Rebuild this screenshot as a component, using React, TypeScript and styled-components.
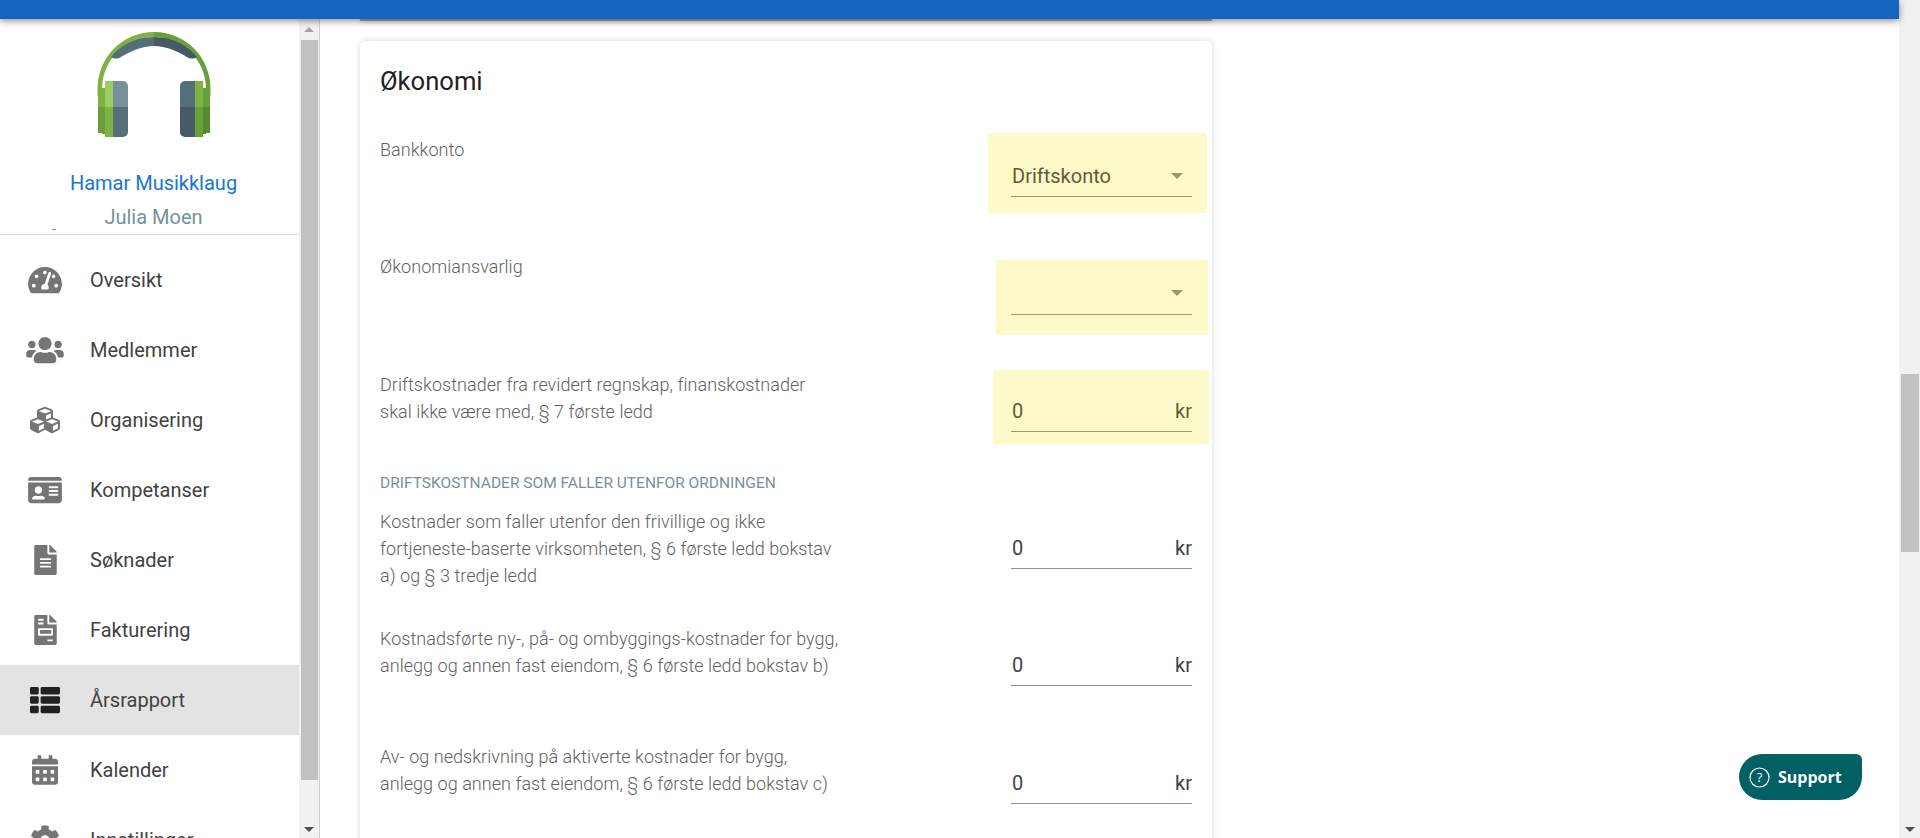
import React from "react";
import styled, { createGlobalStyle } from "styled-components";
import {
  FaTachometerAlt,
  FaUsers,
  FaCubes,
  FaIdCard,
  FaFileAlt,
  FaFileInvoice,
  FaThList,
  FaCalendarAlt,
  FaCog,
} from "react-icons/fa";

const Global = createGlobalStyle`
  html, body { margin: 0; padding: 0; height: 100%; overflow: hidden; background: #fff; }
  body { font-family: Roboto, "Liberation Sans", sans-serif; }
  * { box-sizing: border-box; }
`;

const Screen = styled.div`
  display: flex;
  height: 838px;
  overflow: hidden;
  background: #fff;
`;
const Shell = styled.div`
  flex: 1;
  min-width: 0;
  display: flex;
  flex-direction: column;
`;
const Header = styled.header`
  flex: none;
  height: 19px;
  background: #1565c0;
  box-shadow: 0 2px 7px rgba(0, 0, 0, 0.45);
  position: relative;
  z-index: 2;
`;
const Body = styled.div`
  flex: 1;
  min-height: 0;
  display: flex;
`;
const Sidebar = styled.aside`
  flex: none;
  width: 320px;
  display: flex;
  border-right: 1px solid #d0d0d0;
  overflow: hidden;
`;
const SideContent = styled.div`
  flex: none;
  width: 299px;
  display: flex;
  flex-direction: column;
  overflow: hidden;
  background: #fff;
`;
const Profile = styled.div`
  flex: none;
  height: 216px;
  padding: 13px 0 0 8px;
  display: flex;
  flex-direction: column;
  align-items: center;
  border-bottom: 1px solid #e0e0e0;
  position: relative;
`;
const Logo = styled.svg`
  display: block;
  flex: none;
  width: 114px;
  height: 106px;
`;
const OrgName = styled.div`
  margin-top: 31px;
  font-size: 20px;
  line-height: 28px;
  color: #1976d2;
`;
const UserName = styled.div`
  margin-top: 6px;
  font-size: 20px;
  line-height: 28px;
  color: #78909c;
`;
const ClippedTick = styled.span`
  position: absolute;
  left: 52px;
  bottom: 4px;
  width: 4px;
  height: 1px;
  background: #888;
`;
const Nav = styled.nav`
  flex: none;
  padding-top: 10px;
`;
const NavItem = styled.div<{ $active?: boolean }>`
  height: 70px;
  display: flex;
  align-items: center;
  background: ${(p) => (p.$active ? "#e3e3e3" : "transparent")};
  color: ${(p) => (p.$active ? "#212121" : "#757575")};
`;
const NavIcon = styled.span<{ $w: number }>`
  flex: none;
  width: 90px;
  display: flex;
  justify-content: center;
  line-height: 0;

  & > svg {
    flex: none;
    width: ${(p) => p.$w}px;
    height: 30px;
  }
`;
const NavLabel = styled.span`
  font-size: 20px;
  line-height: 28px;
  margin-top: -1px;
  color: #424242;
`;
const Track = styled.div<{ $width: number }>`
  flex: none;
  width: ${(p) => p.$width}px;
  display: flex;
  flex-direction: column;
  background: #f1f1f1;
`;
const ScrollButton = styled.div<{ $height: number }>`
  flex: none;
  height: ${(p) => p.$height}px;
  display: flex;
  align-items: center;
  justify-content: center;
`;
const ArrowUp = styled.span`
  width: 0;
  height: 0;
  border-left: 5px solid transparent;
  border-right: 5px solid transparent;
  border-bottom: 5px solid #a3a3a3;
`;
const ArrowDown = styled.span`
  width: 0;
  height: 0;
  border-left: 5px solid transparent;
  border-right: 5px solid transparent;
  border-top: 5px solid #505050;
`;
const Thumb = styled.div<{ $height: number }>`
  flex: none;
  height: ${(p) => p.$height}px;
  margin: 0 1px 0 2px;
  background: #c1c1c1;
`;
const Spacer = styled.div<{ $height?: number }>`
  flex: ${(p) => (p.$height ? "none" : 1)};
  height: ${(p) => (p.$height ? `${p.$height}px` : "auto")};
`;
const Main = styled.main`
  flex: 1;
  min-width: 0;
  padding-left: 40px;
  overflow: hidden;
  display: flex;
  flex-direction: column;
  align-items: flex-start;
`;
const PrevCardEdge = styled.div`
  flex: none;
  width: 852px;
  height: 2px;
  margin-bottom: 20px;
  background: #a8a8a8;
  box-shadow: 0 1px 4px rgba(0, 0, 0, 0.2);
`;
const Card = styled.section`
  flex: none;
  width: 852px;
  padding: 24px 20px 40px;
  background: #fff;
  border-radius: 5px;
  box-shadow: 0 0 6px rgba(0, 0, 0, 0.16);
`;
const CardTitle = styled.h2`
  margin: 0 0 38.5px;
  font-size: 25.6px;
  line-height: 32px;
  font-weight: 400;
  color: #212121;
`;
const Row = styled.div<{ $height: number }>`
  height: ${(p) => p.$height}px;
  display: flex;
  justify-content: space-between;
  align-items: flex-start;
`;
const Label = styled.div`
  font-size: 18px;
  line-height: 27px;
  font-weight: 300;
  color: #616161;
  letter-spacing: 0.04px;
`;
const SectionHeading = styled.div`
  height: 39.5px;
  padding-top: 1px;
  font-size: 15.5px;
  line-height: 28px;
  color: #78909c;
  text-transform: uppercase;
`;
const FieldSlot = styled.div`
  flex: none;
  width: 181px;
  margin-top: 22.5px;
`;
const Highlight = styled.div<{ $t: number; $r: number; $b: number; $l: number }>`
  background: #fdfaca;
  padding: ${(p) => `${p.$t}px ${p.$r}px ${p.$b}px ${p.$l}px`};
  margin: ${(p) => `-${p.$t}px -${p.$r}px -${p.$b}px -${p.$l}px`};
`;
const FieldBox = styled.div<{ $tint?: boolean }>`
  height: 39px;
  padding: 0 0 3px 1px;
  display: flex;
  align-items: center;
  justify-content: space-between;
  font-size: 20px;
  color: ${(p) => (p.$tint ? "#5f5d37" : "#424242")};
  border-bottom: 1px solid ${(p) => (p.$tint ? "#9e9c6e" : "#949494")};
`;
const Caret = styled.span`
  width: 0;
  height: 0;
  margin-right: 9px;
  border-left: 6px solid transparent;
  border-right: 6px solid transparent;
  border-top: 6px solid #9a9868;
`;
const Support = styled.button`
  position: fixed;
  left: 1739px;
  top: 754px;
  width: 123px;
  height: 46px;
  padding: 0 0 0 10px;
  display: flex;
  align-items: center;
  gap: 8px;
  border: 0;
  border-radius: 24px 6px 24px 24px;
  background: #006064;
  color: #fff;
  font-family: "Open Sans", sans-serif;
  font-size: 16px;
  font-weight: 700;
`;
const HelpIcon = styled.svg`
  display: block;
  flex: none;
  width: 21px;
  height: 21px;
`;
const HelpMark = styled.text`
  font-family: "Open Sans", sans-serif;
  font-size: 13px;
  font-weight: 400;
  fill: #fff;
  text-anchor: middle;
`;

const navItems = [
  { label: "Oversikt", Icon: FaTachometerAlt, w: 34 },
  { label: "Medlemmer", Icon: FaUsers, w: 38 },
  { label: "Organisering", Icon: FaCubes, w: 30 },
  { label: "Kompetanser", Icon: FaIdCard, w: 34 },
  { label: "Søknader", Icon: FaFileAlt, w: 23 },
  { label: "Fakturering", Icon: FaFileInvoice, w: 23 },
  { label: "Årsrapport", Icon: FaThList, w: 30, active: true },
  { label: "Kalender", Icon: FaCalendarAlt, w: 26 },
  { label: "Innstillinger", Icon: FaCog, w: 30 },
];

function Headphones() {
  return (
    <Logo viewBox="97 32 114 106" aria-hidden="true">
      <path d="M154 32 A56.5 56.5 0 0 0 97.5 88.5 L97.5 96 L102 96 L102 88.5 A52 52 0 0 1 154 37Z" fill="#7cb342" />
      <path d="M154 32 A56.5 56.5 0 0 1 210.5 88.5 L210.5 96 L206 96 L206 88.5 A52 52 0 0 0 154 37Z" fill="#689f38" />
      <path d="M154 37 C134 37 120 46 111 57 C114 59 118 59 121 57 C131 51 142 46 154 46Z" fill="#546e7a" />
      <path d="M154 37 C174 37 188 46 197 57 C194 59 190 59 187 57 C177 51 166 46 154 46Z" fill="#455a64" />
      <path d="M98 88h7v19h-7z" fill="#7cb342" />
      <path d="M98 107h7v27h-3v-1h-4z" fill="#689f38" />
      <path d="M105 81h8v26h-8z" fill="#9ccc65" />
      <path d="M105 107h8v30h-8z" fill="#7cb342" />
      <path d="M113 81h10a5 5 0 0 1 5 5v21h-15z" fill="#78909c" />
      <path d="M113 107h15v25a5 5 0 0 1 -5 5h-10z" fill="#546e7a" />
      <path d="M195 81h-10a5 5 0 0 0 -5 5v21h15z" fill="#546e7a" />
      <path d="M195 107h-15v25a5 5 0 0 0 5 5h10z" fill="#455a64" />
      <path d="M195 81h8v26h-8z" fill="#7cb342" />
      <path d="M195 107h8v30h-8z" fill="#689f38" />
      <path d="M203 88h7v19h-7z" fill="#689f38" />
      <path d="M203 107h7v26h-4v1h-3z" fill="#558b2f" />
    </Logo>
  );
}

function Amount({ tint }: { tint?: boolean }) {
  return (
    <FieldBox $tint={tint}>
      <span>0</span>
      <span>kr</span>
    </FieldBox>
  );
}

export default function App() {
  return (
    <Screen>
      <Global />
      <Shell>
        <Header />
        <Body>
          <Sidebar>
            <SideContent>
              <Profile>
                <Headphones />
                <OrgName>Hamar Musikklaug</OrgName>
                <UserName>Julia Moen</UserName>
                <ClippedTick />
              </Profile>
              <Nav>
                {navItems.map(({ label, Icon, w, active }) => (
                  <NavItem key={label} $active={active}>
                    <NavIcon $w={w}>
                      <Icon />
                    </NavIcon>
                    <NavLabel>{label}</NavLabel>
                  </NavItem>
                ))}
              </Nav>
            </SideContent>
            <Track $width={20}>
              <ScrollButton $height={21}>
                <ArrowUp />
              </ScrollButton>
              <Thumb $height={740} />
              <Spacer />
              <ScrollButton $height={17}>
                <ArrowDown />
              </ScrollButton>
            </Track>
          </Sidebar>
          <Main>
            <PrevCardEdge />
            <Card>
              <CardTitle>Økonomi</CardTitle>
              <Row $height={117.5}>
                <Label>Bankkonto</Label>
                <FieldSlot>
                  <Highlight $t={25} $r={15} $b={16} $l={23}>
                    <FieldBox $tint>
                      <span>Driftskonto</span>
                      <Caret />
                    </FieldBox>
                  </Highlight>
                </FieldSlot>
              </Row>
              <Row $height={117.5}>
                <Label>Økonomiansvarlig</Label>
                <FieldSlot>
                  <Highlight $t={16} $r={16} $b={20} $l={15}>
                    <FieldBox $tint>
                      <span />
                      <Caret />
                    </FieldBox>
                  </Highlight>
                </FieldSlot>
              </Row>
              <Row $height={97.5}>
                <Label>
                  Driftskostnader fra revidert regnskap, finanskostnader
                  <br />
                  skal ikke være med, § 7 første ledd
                </Label>
                <FieldSlot>
                  <Highlight $t={23} $r={17} $b={12} $l={18}>
                    <Amount tint />
                  </Highlight>
                </FieldSlot>
              </Row>
              <SectionHeading>Driftskostnader som faller utenfor ordningen</SectionHeading>
              <Row $height={117}>
                <Label>
                  Kostnader som faller utenfor den frivillige og ikke
                  <br />
                  fortjeneste-baserte virksomheten, § 6 første ledd bokstav
                  <br />
                  a) og § 3 tredje ledd
                </Label>
                <FieldSlot>
                  <Amount />
                </FieldSlot>
              </Row>
              <Row $height={118}>
                <Label>
                  Kostnadsførte ny-, på- og ombyggings-kostnader for bygg,
                  <br />
                  anlegg og annen fast eiendom, § 6 første ledd bokstav b)
                </Label>
                <FieldSlot>
                  <Amount />
                </FieldSlot>
              </Row>
              <Row $height={117.5}>
                <Label>
                  Av- og nedskrivning på aktiverte kostnader for bygg,
                  <br />
                  anlegg og annen fast eiendom, § 6 første ledd bokstav c)
                </Label>
                <FieldSlot>
                  <Amount />
                </FieldSlot>
              </Row>
            </Card>
          </Main>
        </Body>
      </Shell>
      <Track $width={21}>
        <Spacer $height={374} />
        <Thumb $height={178} />
        <Spacer />
        <ScrollButton $height={17}>
          <ArrowDown />
        </ScrollButton>
      </Track>
      <Support type="button">
        <HelpIcon viewBox="0 0 21 21" aria-hidden="true">
          <circle cx="10.5" cy="10.5" r="9.5" fill="none" stroke="#fff" strokeWidth="1.2" />
          <HelpMark x="10.5" y="15">?</HelpMark>
        </HelpIcon>
        Support
      </Support>
    </Screen>
  );
}
